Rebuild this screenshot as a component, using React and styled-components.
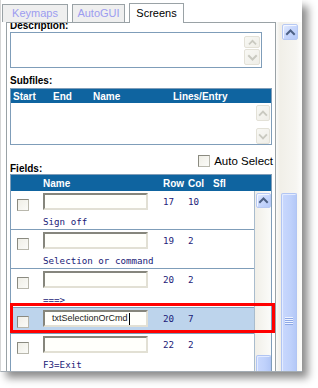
import React from "react";
import styled, { createGlobalStyle } from "styled-components";

const Global = createGlobalStyle`
  html, body { margin: 0; padding: 0; background: #fff; }
  body { font-family: "Liberation Sans", Arial, sans-serif; }
  * { box-sizing: border-box; }
`;

const Stage = styled.div`
  width: 318px;
  height: 388px;
  overflow: hidden;
  background: #fff;
`;

const Window = styled.div`
  box-sizing: content-box;
  width: 301px;
  height: 371px;
  border-left: 1px solid #d6d6d6;
  border-bottom: 1px solid #a3acb4;
  background: #fff;
  box-shadow: 6px 6px 8px rgba(0, 0, 0, 0.45);
  display: flex;
  flex-direction: column;
  overflow: hidden;
`;

const TabBar = styled.div`
  height: 22px;
  flex-shrink: 0;
  display: flex;
  align-items: flex-end;
  gap: 4px;
  padding-left: 1px;
`;

const Tab = styled.div`
  width: ${(p) => p.$w}px;
  height: ${(p) => (p.$active ? 20 : 18)}px;
  margin-bottom: ${(p) => (p.$active ? -1 : 0)}px;
  position: relative;
  z-index: ${(p) => (p.$active ? 2 : 0)};
  border: 1px solid #9aa2a6;
  border-bottom: none;
  background: ${(p) => (p.$active ? "#fff" : "#efefef")};
  color: ${(p) => (p.$active ? "#000" : "#9c9cf0")};
  font-size: 11px;
  line-height: 13px;
  padding-top: ${(p) => (p.$active ? 3 : 2)}px;
  text-align: center;
  white-space: nowrap;
`;

const Main = styled.div`
  flex: 1;
  min-height: 0;
  display: flex;
  padding-left: 5px;
`;

const Panel = styled.div`
  width: 270px;
  flex-shrink: 0;
  border: 1px solid #9aa2a6;
  border-bottom: none;
  position: relative;
  overflow: hidden;
  padding: 0 3px;
`;

const OuterScroll = styled.div`
  width: 26px;
  flex-shrink: 0;
  background: linear-gradient(to right, #fbfbfa 0px, #f1efe8 4px, #f6f5f1 20px, #fdfdfc 26px);
  display: flex;
  flex-direction: column;
  align-items: flex-start;
  padding-left: 5px;
`;

const XPButton = styled.div`
  width: ${(p) => p.$w || 15}px;
  height: ${(p) => p.$h || 15}px;
  margin-top: ${(p) => p.$mt || 0}px;
  margin-left: ${(p) => p.$ml || 0}px;
  flex-shrink: 0;
  border: 1px solid #b7c9f3;
  border-radius: 2px;
  background: linear-gradient(135deg, #e4ecfe 0%, #c9d8fc 45%, #b5c9f8 100%);
  box-shadow: inset 1px 1px 0 #f4f7ff;
  display: flex;
  align-items: center;
  justify-content: center;
`;

const DisabledButton = styled.div`
  width: ${(p) => p.$w || 15}px;
  height: ${(p) => p.$h || 15}px;
  margin-top: ${(p) => p.$mt || 0}px;
  flex-shrink: 0;
  border: 1px solid #e3e1d7;
  border-radius: 2px;
  background: linear-gradient(135deg, #f8f8f4 0%, #efeee8 100%);
  display: flex;
  align-items: center;
  justify-content: center;
`;

const Thumb = styled.div`
  width: ${(p) => p.$w || 16}px;
  margin-top: ${(p) => p.$mt || 0}px;
  flex: 1;
  border: 1px solid #b1c5f3;
  border-bottom: none;
  border-radius: 2px 2px 0 0;
  background: linear-gradient(to right, #c9d8fd 0%, #bfd1fb 60%, #b4c8f7 100%);
  box-shadow: inset 1px 1px 0 #e3ebff;
  padding-left: 3px;
`;

const Grip = styled.div`
  width: 8px;
  height: 8px;
  margin-top: ${(p) => p.$mt}px;
  background: repeating-linear-gradient(to bottom, #eef3ff 0 1px, #8da8e6 1px 2px);
`;

const Label = styled.div`
  font-size: 10px;
  font-weight: bold;
  line-height: ${(p) => p.$lh || 12}px;
  color: #000;
  margin-top: ${(p) => p.$mt || 0}px;
  margin-bottom: ${(p) => p.$mb || 0}px;
  white-space: nowrap;
`;

const TextBox = styled.div`
  width: 252px;
  height: 36px;
  border: 1px solid #7f9db9;
  background: #fff;
  display: flex;
  justify-content: flex-end;
`;

const MiniScroll = styled.div`
  width: ${(p) => p.$w}px;
  display: flex;
  flex-direction: column;
  padding-top: ${(p) => p.$pt}px;
`;

const Table = styled.div`
  width: 262px;
  border: 1px solid #7f9db9;
`;

const SubHead = styled.div`
  display: grid;
  grid-template-columns: 40px 40px 80px 1fr;
  padding: 1px 0 0 2px;
  height: 14px;
  line-height: 13px;
  background: #0f64a0;
  color: #fff;
  font-size: 10px;
  font-weight: bold;
  white-space: nowrap;
`;

const SubBody = styled.div`
  height: 41px;
  display: flex;
  justify-content: flex-end;
  background: #fff;
`;

const FieldsBar = styled.div`
  margin-top: 8px;
  height: 21px;
  display: flex;
  justify-content: space-between;
  align-items: flex-start;
`;

const AutoSelect = styled.label`
  display: flex;
  align-items: center;
  gap: 4px;
  height: 15px;
  font-size: 11.5px;
  line-height: 14px;
  color: #000;
  margin-right: -1px;
  white-space: nowrap;
`;

const Check = styled.span`
  display: block;
  width: 12px;
  height: 12px;
  border: 1px solid #8a8a80;
  border-right-color: #b9b8ad;
  border-bottom-color: #b9b8ad;
  background: linear-gradient(135deg, #efeee6 0%, #fbfbf8 100%);
  margin-top: ${(p) => p.$mt || 0}px;
  margin-left: ${(p) => p.$ml || 0}px;
`;

const cols = "32px 120px 25px 25px 1fr";

const FieldsHead = styled.div`
  display: grid;
  grid-template-columns: ${cols};
  height: 16px;
  padding-top: 2px;
  line-height: 14px;
  background: #0f64a0;
  color: #fff;
  font-size: 10px;
  font-weight: bold;
  white-space: nowrap;
`;

const FieldsBody = styled.div`
  display: flex;
  height: 200px;
`;

const Rows = styled.div`
  width: 244px;
  border-right: 1px solid #a9bccd;
  background: #fff;
`;

const Row = styled.div`
  display: grid;
  grid-template-columns: ${cols};
  align-items: start;
  padding-top: 2px;
  padding-bottom: ${(p) => (p.$hasText ? 1 : 5)}px;
  border-bottom: 1px solid #7f9db9;
  background: ${(p) => (p.$selected ? "#bdd4ec" : "#fff")};
`;

const NameCell = styled.div`
  display: flex;
  flex-direction: column;
`;

const InputBox = styled.div`
  width: 105px;
  height: 17px;
  border: 2px solid;
  border-color: #86867c #e2e0d4 #e2e0d4 #86867c;
  background: #fffffb;
  font-family: "Liberation Sans", Arial, sans-serif;
  font-size: 9px;
  line-height: 13px;
  color: #222;
  padding-left: 7px;
  display: flex;
  align-items: center;
  white-space: nowrap;
`;

const Caret = styled.span`
  display: inline-block;
  width: 1px;
  height: 12px;
  background: #000;
  margin-left: 1px;
`;

const Mono = styled.div`
  font-family: "DejaVu Sans Mono", "Liberation Mono", monospace;
  font-size: 9.2px;
  line-height: 12px;
  color: #1b1b78;
  white-space: nowrap;
  margin-top: ${(p) => p.$mt || 0}px;
  padding-top: ${(p) => p.$pt || 0}px;
`;

const VScroll = styled.div`
  width: 16px;
  background: linear-gradient(to right, #f1efe8, #fbfbf9);
  display: flex;
  flex-direction: column;
  padding: 2px 0 0 1px;
`;

const RedMark = styled.div`
  position: absolute;
  left: 3px;
  top: 280px;
  width: 265px;
  height: 30px;
  border: 3px solid #ff0000;
  pointer-events: none;
`;

const Arrow = ({ dir = "up", color = "#4d6185", size = 13 }) => (
  <svg width={size} height={size} viewBox="0 0 13 13">
    <path
      d={dir === "up" ? "M3 8 L6.5 4.5 L10 8" : "M3 5 L6.5 8.5 L10 5"}
      fill="none"
      stroke={color}
      strokeWidth="2"
      strokeLinecap="square"
    />
  </svg>
);

const rows = [
  { row: 17, col: 10, text: "Sign off" },
  { row: 19, col: 2, text: "Selection or command" },
  { row: 20, col: 2, text: "===>" },
  { row: 20, col: 7, value: "txtSelectionOrCmd", selected: true },
  { row: 22, col: 2, text: "F3=Exit" },
];

export default function App() {
  return (
    <Stage>
      <Global />
      <Window>
        <TabBar>
          <Tab $w={66}>Keymaps</Tab>
          <Tab $w={53}>AutoGUI</Tab>
          <Tab $w={55} $active>Screens</Tab>
        </TabBar>
        <Main>
          <Panel>
            <Label $mt={-3}>Description:</Label>
            <TextBox>
              <MiniScroll $w={17} $pt={3}>
                <DisabledButton $w={16} $h={12}>
                  <Arrow dir="up" color="#c9c9c0" size={11} />
                </DisabledButton>
                <DisabledButton $w={16} $h={16} $mt={1}>
                  <Arrow dir="down" color="#c9c9c0" />
                </DisabledButton>
              </MiniScroll>
            </TextBox>

            <Label $mt={7} $mb={1}>Subfiles:</Label>
            <Table>
              <SubHead>
                <span>Start</span>
                <span>End</span>
                <span>Name</span>
                <span>Lines/Entry</span>
              </SubHead>
              <SubBody>
                <MiniScroll $w={15} $pt={2}>
                  <DisabledButton $w={14} $h={16}>
                    <Arrow dir="up" color="#c9c9c0" />
                  </DisabledButton>
                  <DisabledButton $w={14} $h={16} $mt={7}>
                    <Arrow dir="down" color="#c9c9c0" />
                  </DisabledButton>
                </MiniScroll>
              </SubBody>
            </Table>

            <FieldsBar>
              <Label $mt={10} $lh={11}>Fields:</Label>
              <AutoSelect>
                <Check />
                <span>Auto Select</span>
              </AutoSelect>
            </FieldsBar>

            <Table>
              <FieldsHead>
                <span />
                <span>Name</span>
                <span>Row</span>
                <span>Col</span>
                <span>Sfl</span>
              </FieldsHead>
              <FieldsBody>
                <Rows>
                  {rows.map((r, i) => (
                    <Row key={i} $hasText={!!r.text} $selected={r.selected}>
                      <Check $mt={6} $ml={6} />
                      <NameCell>
                        <InputBox>
                          {r.value}
                          {r.value && <Caret />}
                        </InputBox>
                        {r.text && <Mono $mt={6}>{r.text}</Mono>}
                      </NameCell>
                      <Mono $pt={3}>{r.row}</Mono>
                      <Mono $pt={3}>{r.col}</Mono>
                      <span />
                    </Row>
                  ))}
                </Rows>
                <VScroll>
                  <XPButton $w={15} $h={15}>
                    <Arrow dir="up" />
                  </XPButton>
                  <Thumb $w={15} $mt={147} />
                </VScroll>
              </FieldsBody>
            </Table>
            <RedMark />
          </Panel>
          <OuterScroll>
            <XPButton $w={16} $h={16} $mt={2} $ml={1}>
              <Arrow dir="up" />
            </XPButton>
            <Thumb $w={16} $mt={153}>
              <Grip $mt={123} />
            </Thumb>
          </OuterScroll>
        </Main>
      </Window>
    </Stage>
  );
}
